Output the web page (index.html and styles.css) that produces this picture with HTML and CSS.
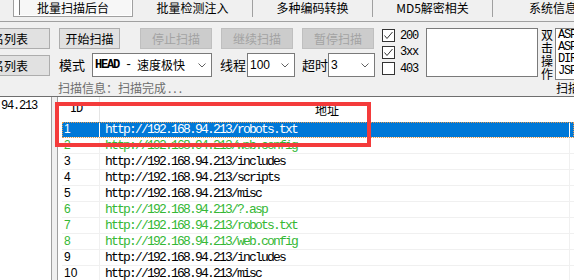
FILE: index.html
```html
<!DOCTYPE html>
<html lang="zh-CN">
<head>
  <meta charset="UTF-8">
  <meta name="viewport" content="width=device-width, initial-scale=1.0">
  <title>批量扫描后台</title>
  <link rel="stylesheet" href="styles.css">
</head>
<body>
  <!-- Tab bar -->
  <div class="tabs">
    <div class="tab active"><span>批量扫描后台</span></div>
    <div class="tab">批量检测注入</div>
    <div class="tab">多种编码转换</div>
    <div class="tab">MD5解密相关</div>
    <div class="tab">系统信息</div>
  </div>

  <!-- Scan controls -->
  <div class="controls">
    <div class="side-buttons">
      <button type="button" class="btn">导入域名列表</button>
      <button type="button" class="btn">清空域名列表</button>
    </div>

    <div class="scan-panel">
      <div class="scan-row">
        <button type="button" class="btn start">开始扫描</button>
        <button type="button" class="btn wide" disabled>停止扫描</button>
        <button type="button" class="btn wide" disabled>继续扫描</button>
        <button type="button" class="btn wide" disabled>暂停扫描</button>
      </div>
      <div class="scan-row options">
        <span class="field-label">模式</span>
        <div class="select mode">
          <span class="mono"><b>HEAD</b>&nbsp;-&nbsp;</span>速度极快
          <svg width="8" height="5" viewBox="0 0 8 5"><polyline points="0.5,0.5 4,4 7.5,0.5" fill="none" stroke="#606060"/></svg>
        </div>
        <span class="field-label threads">线程</span>
        <div class="select threads-select">
          <span class="num">100</span>
          <svg width="8" height="5" viewBox="0 0 8 5"><polyline points="0.5,0.5 4,4 7.5,0.5" fill="none" stroke="#606060"/></svg>
        </div>
        <span class="field-label timeout">超时</span>
        <div class="select timeout-select">
          <span class="num">3</span>
          <svg width="8" height="5" viewBox="0 0 8 5"><polyline points="0.5,0.5 4,4 7.5,0.5" fill="none" stroke="#606060"/></svg>
        </div>
      </div>
      <div class="status">扫描信息：扫描完成<span class="dots">...</span></div>
    </div>

    <div class="codes">
      <label class="check">
        <span class="box"><svg width="11" height="11" viewBox="0 0 11 11"><polyline points="1.5,5.5 4,8.5 9.5,2" fill="none" stroke="#333"/></svg></span>
        <span class="mono">200</span>
      </label>
      <label class="check">
        <span class="box"><svg width="11" height="11" viewBox="0 0 11 11"><polyline points="1.5,5.5 4,8.5 9.5,2" fill="none" stroke="#333"/></svg></span>
        <span class="mono">3xx</span>
      </label>
      <label class="check">
        <span class="box"></span>
        <span class="mono">403</span>
      </label>
    </div>

    <div class="textbox"></div>

    <div class="vertical">双<br>击<br>操<br>作</div>

    <div class="dict">
      <div class="dict-list mono">ASP<br>ASPX<br>DIR<br>JSP</div>
      <div class="dict-label">扫描字典</div>
    </div>
  </div>

  <!-- Results -->
  <div class="main">
    <div class="url-panel mono">http://192.168.94.213</div>

    <div class="listview">
      <div class="lv-header">
        <div class="lv-head-id mono">ID</div>
        <div class="lv-head-url">地址</div>
      </div>

      <div class="lv-row selected"><div class="cell-id">1</div><div class="cell-url mono">http://192.168.94.213/robots.txt</div></div>
      <div class="lv-row found"><div class="cell-id">2</div><div class="cell-url mono">http://192.168.94.213/web.config</div></div>
      <div class="lv-row"><div class="cell-id">3</div><div class="cell-url mono">http://192.168.94.213/includes</div></div>
      <div class="lv-row"><div class="cell-id">4</div><div class="cell-url mono">http://192.168.94.213/scripts</div></div>
      <div class="lv-row"><div class="cell-id">5</div><div class="cell-url mono">http://192.168.94.213/misc</div></div>
      <div class="lv-row found"><div class="cell-id">6</div><div class="cell-url mono">http://192.168.94.213/?.asp</div></div>
      <div class="lv-row found"><div class="cell-id">7</div><div class="cell-url mono">http://192.168.94.213/robots.txt</div></div>
      <div class="lv-row found"><div class="cell-id">8</div><div class="cell-url mono">http://192.168.94.213/web.config</div></div>
      <div class="lv-row"><div class="cell-id">9</div><div class="cell-url mono">http://192.168.94.213/includes</div></div>
      <div class="lv-row"><div class="cell-id">10</div><div class="cell-url mono">http://192.168.94.213/misc</div></div>
    </div>

    <!-- annotation box -->
    <div class="highlight"></div>
  </div>
</body>
</html>
```

FILE: styles.css
```css
* {
  box-sizing: border-box;
}

html {
  overflow: hidden;
}

body {
  margin: 0;
  width: 574px;
  height: 280px;
  overflow: hidden;
  background-color: #f0f0f0;
  font-family: "Noto Sans CJK SC", sans-serif;
  font-size: 12px;
  line-height: 16px;
  color: #000;
}

.mono {
  font-family: "Liberation Mono", "Noto Sans CJK SC", monospace;
  letter-spacing: -1.2px;
}

/* Tabs */
.tabs {
  display: flex;
  height: 22px;
  padding-left: 13px;
  border-bottom: 1px solid #a0a0a0;
  overflow: hidden;
}

.tab {
  flex: none;
  width: 120px;
  height: 17px;
  line-height: 16px;
  text-align: center;
  border-right: 1px solid #a0a0a0;
}

.tab:last-child {
  border-right: none;
}

.tab.active {
  padding: 0 1px 1px 5px;
  background-color: #fff;
  border: 1px solid #a0a0a0;
  border-top: none;
}

.tab.active span {
  display: block;
  height: 100%;
  padding-right: 5px;
  line-height: 15px;
  background-color: #f7f7f7;
  border-left: 1px solid #7a7a7a;
}

/* Controls */
.controls {
  display: flex;
  height: 74px;
  padding-top: 6px;
  overflow: hidden;
}

.controls > * {
  flex: none;
}

.side-buttons {
  display: flex;
  flex-direction: column;
  gap: 6px;
  width: 116px;
  margin-left: -66px;
}

.btn {
  height: 21px;
  padding: 0;
  font: inherit;
  line-height: 19px;
  color: #000;
  background-color: #e1e1e1;
  border: 1px solid #adadad;
}

.btn:disabled {
  color: #a3a3a3;
  background-color: #cccccc;
  border-color: #bfbfbf;
}

.scan-panel {
  width: 316px;
  margin-left: 9px;
}

.scan-row {
  display: flex;
}

.scan-row > * {
  flex: none;
}

.btn.start {
  width: 61px;
  margin-right: 20px;
}

.btn.wide {
  width: 72px;
  margin-right: 9px;
}

.options {
  height: 24px;
  margin-top: 4px;
  align-items: center;
}

.field-label {
  width: 26px;
  font-size: 13px;
}

.field-label.threads {
  margin-left: 8px;
}

.field-label.timeout {
  margin-left: 7px;
}

.select {
  display: flex;
  align-items: center;
  height: 24px;
  padding-left: 2px;
  background-color: #fff;
  border: 1px solid #7a7a7a;
}

.select svg {
  margin-left: auto;
  margin-right: 5px;
}

.select b {
  font-weight: bold;
}

.select.mode {
  width: 120px;
  margin-left: 7px;
}

.select.threads-select {
  width: 48px;
  margin-left: 1px;
}

.select.timeout-select {
  width: 47px;
}

.num {
  font-family: "Liberation Sans", sans-serif;
}

.status {
  margin-top: 4px;
  margin-left: -1px;
  line-height: 14px;
  color: #6d6d6d;
}

.dots {
  letter-spacing: 2px;
  margin-left: 2px;
}

/* Status code checkboxes */
.codes {
  width: 44px;
  margin-left: 7px;
  padding-top: 1px;
}

.check {
  display: flex;
  align-items: center;
  gap: 5px;
  height: 13px;
  margin-bottom: 3.5px;
}

.box {
  display: flex;
  width: 13px;
  height: 13px;
  background-color: #fff;
  border: 1px solid #333;
}

.textbox {
  width: 112px;
  height: 49px;
  background-color: #fff;
  border: 1px solid #7a7a7a;
}

.vertical {
  width: 13px;
  margin-left: 3px;
  line-height: 13px;
}

.dict {
  margin-left: 1px;
}

.dict-list {
  width: 60px;
  height: 52px;
  padding: 0 2px;
  line-height: 12px;
  background-color: #fff;
  border: 1px solid #828282;
}

.dict-label {
  margin-top: 1px;
  padding-left: 1px;
  line-height: 14px;
  white-space: nowrap;
}

/* Results */
.main {
  position: relative;
  display: flex;
  height: 184px;
  border-top: 1px solid #6e6e6e;
  overflow: hidden;
}

.url-panel {
  flex: none;
  width: 142px;
  margin-left: -90px;
  padding: 3px 0 0 1px;
  line-height: 13px;
  background-color: #fff;
  border-right: 1px solid #a0a0a0;
}

.listview {
  flex: 1;
  margin-left: 5px;
  background-color: #fff;
  border-left: 1px solid #a0a0a0;
}

.lv-header {
  display: flex;
  height: 25px;
  line-height: 25px;
}

.lv-head-id {
  flex: none;
  width: 42px;
  padding-left: 12px;
  border-right: 1px solid #e5e5e5;
}

.lv-head-url {
  flex: none;
  width: 470px;
  padding-right: 16px;
  text-align: center;
}

.lv-row {
  display: flex;
  height: 16px;
  margin-left: 4px;
  line-height: 15px;
  border-bottom: 1px solid #f0f0f0;
}

.cell-id {
  flex: none;
  width: 38px;
  padding-left: 2px;
  font-family: "Liberation Sans", sans-serif;
  border-right: 1px solid #f0f0f0;
}

.cell-url {
  flex: none;
  width: 470px;
  padding-left: 5px;
  font-size: 13px;
  letter-spacing: -1.8px;
  border-right: 1px solid #f0f0f0;
  white-space: nowrap;
}

.lv-row.found {
  color: #35b835;
}

.lv-row.selected {
  color: #fff;
  background-color: #0078d7;
  outline: 1px dotted #e39a4f;
  outline-offset: -1px;
}

.lv-row.selected .cell-id,
.lv-row.selected .cell-url {
  border-right-color: #fff;
}

.highlight {
  position: absolute;
  left: 55px;
  top: 5px;
  width: 316px;
  height: 45px;
  border: 4px solid #f43b3b;
}
```
